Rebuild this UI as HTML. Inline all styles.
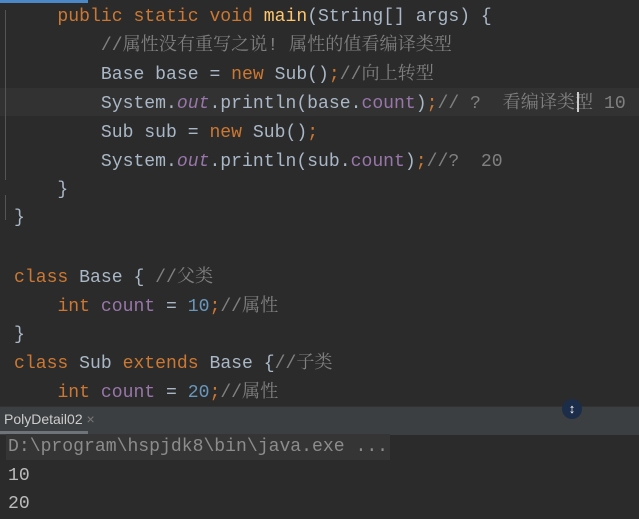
<!DOCTYPE html>
<html><head><meta charset="utf-8"><style>
body{margin:0;width:639px;height:515px;overflow:hidden;background:#2b2b2b;position:relative;font-family:"Liberation Mono","Noto Sans CJK SC",monospace;font-size:18.1px;color:#a9b7c6}
.l{position:absolute;left:14px;white-space:pre;line-height:29px;height:29px}
.k{color:#cc7832}.c{color:#808080;font-family:"Liberation Mono","Noto Serif CJK SC",monospace}.f{color:#9876aa}.n{color:#6897bb}.i{font-style:italic;color:#9876aa}.m{color:#ffc66d}
.gl{position:absolute;left:5px;width:1px;background:#555}
</style></head><body>
<div style="position:absolute;left:0;top:0;width:88px;height:3px;background:#4a88c7"></div>
<div style="position:absolute;left:0;top:88px;width:639px;height:28px;background:#323232"></div>
<div class="gl" style="top:10px;height:170px"></div>
<div class="gl" style="top:195px;height:25px"></div>
<div class="l" style="top:3px"><span class="k">    public static void </span><span class="m">main</span>(String[] args) {</div>
<div class="l" style="top:32px">        <span class="c">//属性没有重写之说! 属性的值看编译类型</span></div>
<div class="l" style="top:61px">        Base base = <span class="k">new </span>Sub()<span class="k">;</span><span class="c">//向上转型</span></div>
<div class="l" style="top:90px">        System.<span class="i">out</span>.println(base.<span class="f">count</span>)<span class="k">;</span><span class="c">// ?  看编译类型 10</span></div>
<div style="position:absolute;left:577px;top:92px;width:2px;height:20px;background:#ccc"></div>
<div class="l" style="top:119px">        Sub sub = <span class="k">new </span>Sub()<span class="k">;</span></div>
<div class="l" style="top:148px">        System.<span class="i">out</span>.println(sub.<span class="f">count</span>)<span class="k">;</span><span class="c">//?  20</span></div>
<div class="l" style="top:176px">    }</div>
<div class="l" style="top:204px">}</div>
<div class="l" style="top:264px"><span class="k">class </span>Base { <span class="c">//父类</span></div>
<div class="l" style="top:293px">    <span class="k">int </span><span class="f">count</span> = <span class="n">10</span><span class="k">;</span><span class="c">//属性</span></div>
<div class="l" style="top:321px">}</div>
<div class="l" style="top:350px"><span class="k">class </span>Sub <span class="k">extends </span>Base {<span class="c">//子类</span></div>
<div class="l" style="top:379px">    <span class="k">int </span><span class="f">count</span> = <span class="n">20</span><span class="k">;</span><span class="c">//属性</span></div>
<div style="position:absolute;left:0;top:406px;width:639px;height:28px;background:#3c3f41;border-top:1px solid #323232"></div>
<div style="position:absolute;left:4px;top:411px;font-family:'Liberation Sans',sans-serif;font-size:14px;color:#ccc">PolyDetail02 <span style="color:#777">×</span></div>
<div style="position:absolute;left:0;top:431px;width:88px;height:3px;background:#6f737a"></div>
<div style="position:absolute;left:562px;top:399px;width:20px;height:20px;border-radius:50%;background:#1c2d4a;color:#fff;font-size:13px;text-align:center;line-height:20px;font-family:'Liberation Sans',sans-serif">↕</div>
<div style="position:absolute;left:6px;top:434px;width:384px;height:26px;background:#353535"></div>
<div class="l" style="left:8px;top:433px;color:#8c8c8c">D:\program\hspjdk8\bin\java.exe ...</div>
<div class="l" style="left:8px;top:462px;color:#bbb">10</div>
<div class="l" style="left:8px;top:490px;color:#bbb">20</div>
</body></html>
